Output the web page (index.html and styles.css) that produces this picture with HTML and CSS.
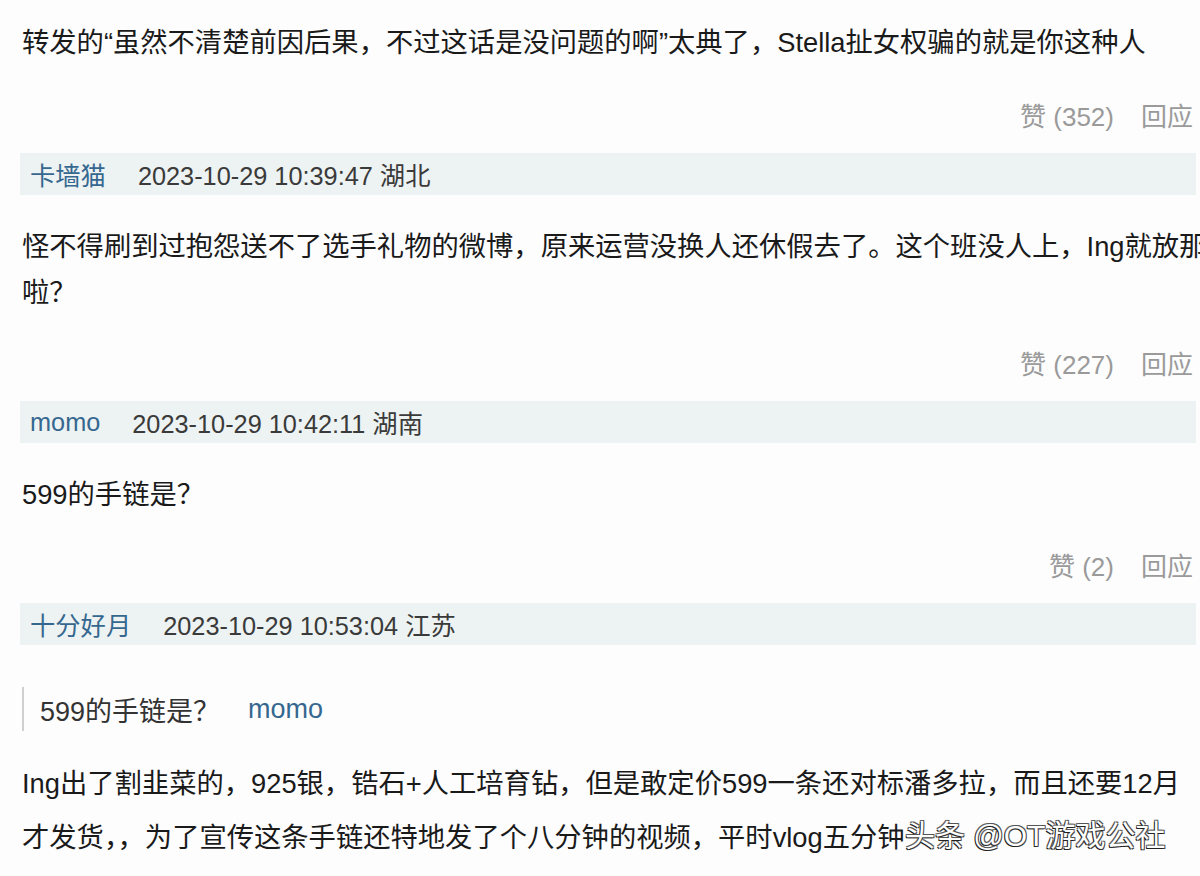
FILE: index.html
```html
<!DOCTYPE html>
<html lang="zh-CN">

<head>
    <meta charset="UTF-8">
    <meta name="viewport" content="width=device-width, initial-scale=1.0">
    <title>回应</title>
    <link rel="stylesheet" href="styles.css">
</head>

<body>
    <div class="page">
        <div class="tail">
            <p class="text first">转发的“虽然不清楚前因后果，不过这话是没问题的啊”太典了，Stella扯女权骗的就是你这种人</p>
            <div class="actions"><span>赞 (352)</span><span>回应</span></div>
        </div>

        <div class="comment">
            <div class="head"><span class="name">卡墙猫</span><span class="meta">2023-10-29 10:39:47 湖北</span></div>
            <p class="text">怪不得刷到过抱怨送不了选手礼物的微博，原来运营没换人还休假去了。这个班没人上，Ing就放那<br>啦？</p>
            <div class="actions"><span>赞 (227)</span><span>回应</span></div>
        </div>

        <div class="comment">
            <div class="head"><span class="name">momo</span><span class="meta">2023-10-29 10:42:11 湖南</span></div>
            <p class="text">599的手链是？</p>
            <div class="actions"><span>赞 (2)</span><span>回应</span></div>
        </div>

        <div class="comment">
            <div class="head"><span class="name">十分好月</span><span class="meta">2023-10-29 10:53:04 江苏</span></div>
            <div class="quote"><span>599的手链是？</span><span class="name">momo</span></div>
            <p class="text loose">Ing出了割韭菜的，925银，锆石+人工培育钻，但是敢定价599一条还对标潘多拉，而且还要12月<br>才发货，，为了宣传这条手链还特地发了个八分钟的视频，平时vlog五分钟</p>
        </div>
    </div>
    <div class="watermark">头条 @OT游戏公社</div>
</body>

</html>
```

FILE: styles.css
```css
body {
    margin: 0;
    background: #fdfdfe;
    color: #1a1a1a;
    font-family: "Liberation Sans", "Noto Sans CJK SC", sans-serif;
    overflow: hidden;
    height: 876px;
    position: relative;
}

.page {
    padding: 20px 4px 0 20px;
}

.text {
    margin: 29px 0 0 2px;
    font-size: 27.3px;
    line-height: 46px;
    white-space: nowrap;
}

.text.first {
    margin-top: 0;
}

.text.loose {
    margin-top: 26px;
    line-height: 54px;
}

.actions {
    display: flex;
    justify-content: flex-end;
    gap: 27px;
    margin-top: 29px;
    padding-right: 3px;
    height: 40px;
    line-height: 40px;
    font-size: 26px;
    color: #9a9a9a;
}

.tail .actions {
    margin-top: 31px;
}

.comment {
    margin-top: 16px;
}

.head {
    display: flex;
    align-items: center;
    gap: 32px;
    height: 42px;
    padding-left: 10px;
    background: #edf2f3;
    font-size: 25.3px;
}

.name {
    color: #36688f;
}

.meta {
    color: #3a3a3a;
}

.quote {
    display: flex;
    align-items: center;
    gap: 28px;
    height: 44px;
    margin: 42px 0 0 2px;
    padding-left: 16px;
    border-left: 2px solid #cfcfcf;
    font-size: 27px;
    color: #333;
}

.watermark {
    position: absolute;
    left: 905px;
    top: 816px;
    font-size: 30px;
    line-height: 40px;
    color: #fff;
    text-shadow: -1px 1px 0 #222, 1px -1px 0 #555, 1px 1px 0 #444, -1px -1px 0 #666;
}
```
